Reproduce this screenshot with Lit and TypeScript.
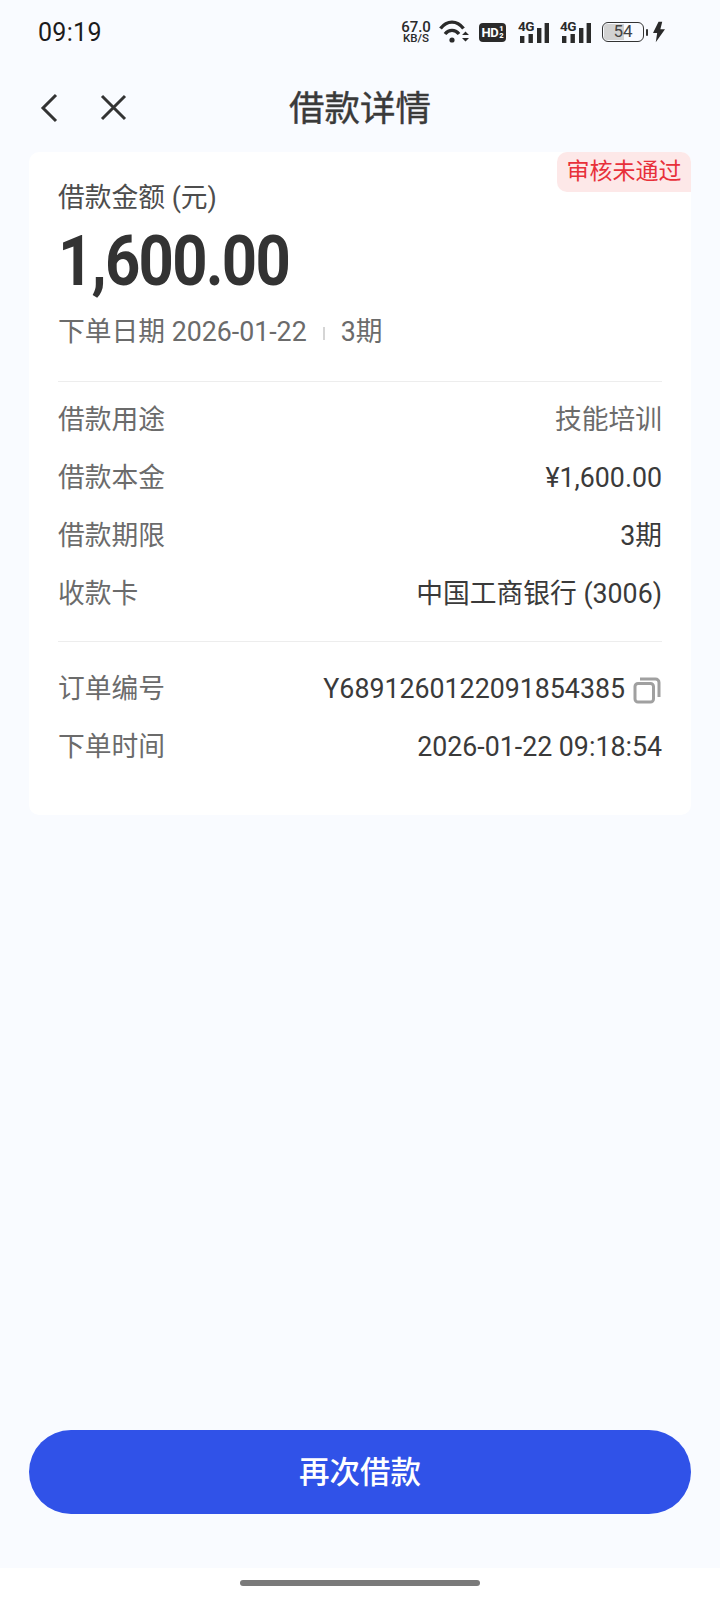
import { LitElement, css, html, svg } from 'lit';
import { customElement } from 'lit/decorators.js';

const signal = svg`
  <rect x="2" y="13" width="4.400" height="7" />
  <rect x="10.500" y="11" width="4.400" height="9" />
  <rect x="19" y="5" width="4.400" height="15" />
  <rect x="26.600" y="0" width="4.400" height="20" />
`;

@customElement('app-root')
export class AppRoot extends LitElement {
  static styles = css`
    :host {
      display: block;
      width: 720px;
      height: 1600px;
      background: #f9fbff;
      font-family: Roboto, "Noto Sans CJK SC", sans-serif;
      color: #333;
    }
    .page { display: flex; flex-direction: column; height: 1600px; }

    .status {
      display: flex;
      align-items: center;
      justify-content: space-between;
      height: 64px;
      padding: 0 55px 0 38px;
      box-sizing: border-box;
      flex: none;
    }
    .time { font-size: 25px; color: #1c1c1c; letter-spacing: 0.3px; }
    .tray { display: flex; align-items: center; color: #2a2a2a; }
    .speed {
      display: flex;
      flex-direction: column;
      align-items: center;
      font-size: 15px;
      font-weight: 500;
      line-height: 12px;
      width: 30px;
      margin-right: 8px;
    }
    .speed small { font-size: 11.500px; font-weight: 500; line-height: 11px; }
    .hd {
      display: flex;
      align-items: center;
      justify-content: center;
      gap: 1px;
      width: 27px;
      height: 19px;
      margin: 0 12px 0 10px;
      border-radius: 4px;
      background: #2a2a2a;
      color: #fff;
      font-size: 13px;
      font-weight: 700;
      letter-spacing: -0.4px;
    }
    .hd span {
      display: flex;
      flex-direction: column;
      font-size: 7.500px;
      line-height: 7.500px;
      letter-spacing: 0;
    }
    .net { position: relative; width: 31px; height: 22px; margin-right: 11px; }
    .net svg { position: absolute; left: 0; bottom: 0; }
    .net span {
      position: absolute;
      left: 0;
      top: -1px;
      font-size: 13.500px;
      font-weight: 700;
      letter-spacing: -0.5px;
      line-height: 12px;
      background: #f9fbff;
      padding-right: 1px;
    }
    .battery {
      position: relative;
      width: 42px;
      height: 20px;
      border: 1.500px solid #333;
      border-radius: 6px;
      box-sizing: border-box;
      overflow: hidden;
      text-align: center;
      font-size: 17px;
      line-height: 17px;
      color: #444;
    }
    .battery i {
      position: absolute;
      left: 1px;
      top: 1px;
      bottom: 1px;
      width: 50%;
      background: #d2d2d2;
      border-radius: 3px 0 0 3px;
    }
    .battery b { position: relative; font-weight: 400; }
    .nub { width: 2px; height: 7px; background: #333; margin: 0 5px 0 2px; border-radius: 1px; }

    .nav {
      position: relative;
      display: flex;
      justify-content: center;
      height: 88px;
      flex: none;
    }
    .nav h1 {
      margin: 0;
      font-size: 35.500px;
      font-weight: 400;
      -webkit-text-stroke: 0.4px #3a3a3a;
      line-height: 91px;
      height: 88px;
      color: #3a3a3a;
    }
    .nav-icons {
      position: absolute;
      left: 40px;
      top: 29px;
      display: flex;
      gap: 41px;
    }
    .nav-icons svg { display: block; }

    .card {
      position: relative;
      margin: 0 29px;
      height: 663px;
      box-sizing: border-box;
      flex: none;
      background: #fff;
      border-radius: 10px;
      padding: 27px 29px 0;
    }
    .badge {
      position: absolute;
      top: 0;
      right: 0;
      width: 134px;
      height: 40px;
      background: #fde8e8;
      border-radius: 10px 10px 0 10px;
      color: #e8303a;
      font-size: 23px;
      line-height: 40px;
      text-align: center;
    }
    .label { font-size: 26.750px; line-height: 38px; color: #4d4d4d; }
    .amount {
      font-size: 70px;
      font-weight: 700;
      line-height: 84px;
      margin-top: 2px;
      letter-spacing: -2px;
      color: #333;
      transform: scaleX(0.88);
      transform-origin: left center;
    }
    .meta {
      display: flex;
      align-items: center;
      margin-top: 9px;
      font-size: 26.750px;
      line-height: 40px;
      color: #6b6b6b;
    }
    .meta i {
      width: 2px;
      height: 13px;
      background: #d5d5d5;
      margin: 3px 16px 0 16px;
    }
    .block { border-top: 1px solid #ededed; }
    .block.first { margin-top: 29px; padding: 18px 0 0; }
    .block.second { margin-top: 27px; padding: 27px 0 0; }
    .row {
      display: flex;
      justify-content: space-between;
      align-items: center;
      height: 40px;
      margin-bottom: 18px;
      font-size: 26.750px;
      line-height: 40px;
    }
    .row span:first-child { color: #6b6b6b; }
    .row span:last-child { color: #3a3a3a; display: flex; align-items: center; }
    .row svg { margin-left: 8px; margin-right: 1px; }
    .row .muted { color: #6b6b6b !important; }
    .copy { margin-top: 2px; }

    .action {
      margin: auto 29px 0;
      height: 84px;
      padding: 0 0 5px;
      flex: none;
      border: none;
      border-radius: 42px;
      background: #3052e8;
      color: #fff;
      font-family: inherit;
      font-size: 30.500px;
      font-weight: 500;
    }
    .strip {
      margin-top: 54px;
      height: 32px;
      flex: none;
      background: #fff;
      display: flex;
      justify-content: center;
      padding-top: 12px;
      box-sizing: border-box;
    }
    .strip div { width: 240px; height: 6px; border-radius: 3px; background: #7a7a7a; }
  `;

  private rows1 = [
    ['借款用途', '技能培训', true],
    ['借款本金', '¥1,600.00', false],
    ['借款期限', '3期', false],
    ['收款卡', '中国工商银行 (3006)', false],
  ] as const;

  private renderNet() {
    return html`
      <div class="net">
        <svg width="31" height="20" viewBox="0 0 31 20" fill="#2a2a2a">${signal}</svg>
        <span>4G</span>
      </div>
    `;
  }

  private renderStatus() {
    return html`
      <div class="status">
        <span class="time">09:19</span>
        <div class="tray">
          <div class="speed">67.0<small>KB/S</small></div>
          <svg width="30" height="24" viewBox="0 0 30 24" fill="none" stroke="#2a2a2a" stroke-width="3.400">
            <path d="M1.500 8.500C8 0 18 0 24.500 8.500" />
            <path d="M6 14c4-4.800 10-4.800 14 0" />
            <circle cx="13" cy="20" r="2.600" fill="#2a2a2a" stroke="none" />
            <path d="M23 15h7l-3.500-3.500zM23 18h7l-3.500 3.500z" fill="#2a2a2a" stroke="none" />
          </svg>
          <div class="hd">HD<span><b>1</b><b>2</b></span></div>
          ${this.renderNet()} ${this.renderNet()}
          <div class="battery"><i></i><b>54</b></div>
          <div class="nub"></div>
          <svg width="12" height="22" viewBox="0 0 13 22" fill="#2a2a2a">
            <path d="M6 0L0 12h4.500L3 22l10-14H8l2-8z" />
          </svg>
        </div>
      </div>
    `;
  }

  render() {
    return html`
      <div class="page">
        ${this.renderStatus()}
        <div class="nav">
          <div class="nav-icons">
            <svg width="18" height="30" viewBox="0 0 18 30" fill="none" stroke="#333" stroke-width="3">
              <path d="M16 2L3 15l13 13" />
            </svg>
            <svg width="30" height="30" viewBox="0 0 30 30" fill="none" stroke="#333" stroke-width="3">
              <path d="M3 3l23 23M26 3L3 26" />
            </svg>
          </div>
          <h1>借款详情</h1>
        </div>
        <section class="card">
          <div class="badge">审核未通过</div>
          <div class="label">借款金额 (元)</div>
          <div class="amount">1,600.00</div>
          <div class="meta">下单日期 2026-01-22<i></i>3期</div>
          <div class="block first">
            ${this.rows1.map(
              ([k, v, muted]) => html`
                <div class="row">
                  <span>${k}</span>
                  <span class=${muted ? 'muted' : ''}>${v}</span>
                </div>
              `,
            )}
          </div>
          <div class="block second">
            <div class="row">
              <span>订单编号</span>
              <span>
                Y6891260122091854385
                <svg class="copy" width="28" height="27" viewBox="0 0 28 27" fill="none" stroke="#a0a0a0" stroke-width="3">
                  <rect x="2" y="6.500" width="18.500" height="18.500" rx="3" />
                  <path d="M7 2h15.500a3.500 3.500 0 0 1 3.500 3.500V20" />
                </svg>
              </span>
            </div>
            <div class="row">
              <span>下单时间</span>
              <span>2026-01-22 09:18:54</span>
            </div>
          </div>
        </section>
        <button class="action">再次借款</button>
        <div class="strip"><div></div></div>
      </div>
    `;
  }
}
